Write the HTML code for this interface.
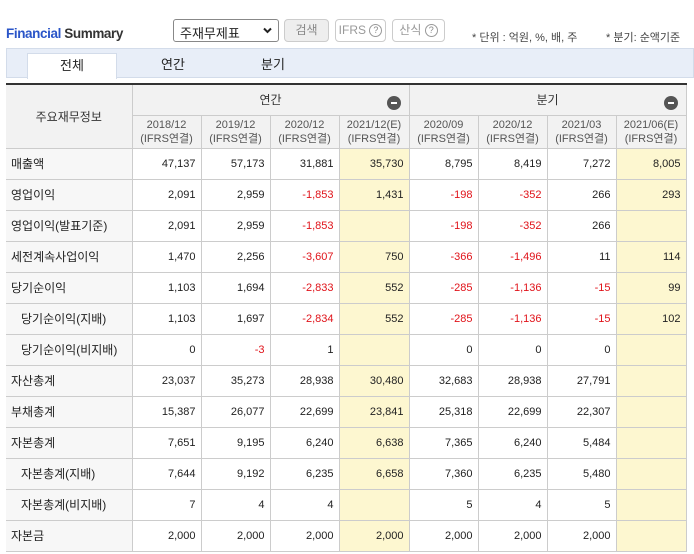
<!DOCTYPE html>
<html><head><meta charset="utf-8"><style>
*{margin:0;padding:0;box-sizing:border-box}
body{width:694px;height:554px;overflow:hidden;background:#fff;font-family:"Liberation Sans","Noto Sans CJK KR",sans-serif;color:#222;position:relative}
.a{position:absolute}
.title{left:6px;top:26px;font-size:13.5px;font-weight:bold;color:#333;letter-spacing:-0.4px}
.title b{color:#2a55c8}
.sel{left:173px;top:19px;width:106px;height:23px;border:1px solid #888;border-radius:3px;font-size:13px;padding:3px 6px}
.btn{top:19px;height:23px;border:1px solid #ccc;border-radius:4px;font-size:12px;color:#999;text-align:center;line-height:21px}
.q{display:inline-block;width:13px;height:13px;border:1px solid #999;border-radius:50%;font-size:9px;line-height:11px;color:#888;vertical-align:1px}
.note{top:29px;font-size:11px;color:#444}
.tabs{left:6px;top:48px;width:688px;height:30px;background:#e8eef8;border:1px solid #d3dcea}
.tab{top:53px;height:25px;font-size:13px;text-align:center;line-height:24px}
table{position:absolute;left:6px;top:83px;border-collapse:collapse;table-layout:fixed;border-top:2px solid #333}
td,th{border:1px solid #ccc;font-size:11px;font-weight:normal;height:31px;text-align:right;padding-right:5px;white-space:nowrap;overflow:hidden}
th{background:#f2f2f2;text-align:center;padding:0;color:#333}
td.l{text-align:left;padding-left:5px;font-size:12px;background:#f7f7f7;border-left:none}
td.i{padding-left:15px}
.y{background:#fdf7d0}
.r{color:#e0131a}
.m{display:inline-block;width:14px;height:14px;border-radius:50%;background:#555;position:absolute;right:8px;top:11px}
.m:after{content:"";position:absolute;left:4px;top:6px;width:6px;height:2px;background:#fff}
th.d{font-size:11px;line-height:14px;color:#555}
</style></head><body>
<div class="a title"><b>Financial</b> Summary</div>
<div class="a sel">주재무제표<svg style="position:absolute;right:6px;top:7px" width="9" height="7" viewBox="0 0 9 7"><path d="M1 1.5L4.5 5L8 1.5" fill="none" stroke="#222" stroke-width="2"/></svg></div>
<div class="a btn" style="left:284px;width:45px;background:#eee;color:#888">검색</div>
<div class="a btn" style="left:335px;width:51px">IFRS <span class="q">?</span></div>
<div class="a btn" style="left:392px;width:53px">산식 <span class="q">?</span></div>
<div class="a note" style="left:472px">* 단위 : 억원, %, 배, 주</div>
<div class="a note" style="left:606px">* 분기: 순액기준</div>
<div class="a tabs"></div>
<div class="a tab" style="left:27px;width:90px;background:#fff;border:1px solid #d3dcea;border-bottom:none;height:26px">전체</div>
<div class="a tab" style="left:140px;width:66px">연간</div>
<div class="a tab" style="left:240px;width:66px">분기</div>
<table>
<colgroup><col style="width:126px"><col style="width:69px"><col style="width:69px"><col style="width:69px"><col style="width:70px"><col style="width:69px"><col style="width:69px"><col style="width:69px"><col style="width:70px"></colgroup>
<tr><th rowspan="2" style="font-size:12px;border-left:none">주요재무정보</th><th colspan="4" style="position:relative;height:31px;font-size:12px">연간<span class="m"></span></th><th colspan="4" style="position:relative;font-size:12px">분기<span class="m"></span></th></tr>
<tr><th class="d" style="height:33px">2018/12<br>(IFRS연결)</th><th class="d">2019/12<br>(IFRS연결)</th><th class="d">2020/12<br>(IFRS연결)</th><th class="d">2021/12(E)<br>(IFRS연결)</th><th class="d">2020/09<br>(IFRS연결)</th><th class="d">2020/12<br>(IFRS연결)</th><th class="d">2021/03<br>(IFRS연결)</th><th class="d">2021/06(E)<br>(IFRS연결)</th></tr>
<tr><td class="l">매출액</td><td>47,137</td><td>57,173</td><td>31,881</td><td class="y">35,730</td><td>8,795</td><td>8,419</td><td>7,272</td><td class="y">8,005</td></tr>
<tr><td class="l">영업이익</td><td>2,091</td><td>2,959</td><td class="r">-1,853</td><td class="y">1,431</td><td class="r">-198</td><td class="r">-352</td><td>266</td><td class="y">293</td></tr>
<tr><td class="l">영업이익(발표기준)</td><td>2,091</td><td>2,959</td><td class="r">-1,853</td><td class="y"></td><td class="r">-198</td><td class="r">-352</td><td>266</td><td class="y"></td></tr>
<tr><td class="l">세전계속사업이익</td><td>1,470</td><td>2,256</td><td class="r">-3,607</td><td class="y">750</td><td class="r">-366</td><td class="r">-1,496</td><td>11</td><td class="y">114</td></tr>
<tr><td class="l">당기순이익</td><td>1,103</td><td>1,694</td><td class="r">-2,833</td><td class="y">552</td><td class="r">-285</td><td class="r">-1,136</td><td class="r">-15</td><td class="y">99</td></tr>
<tr><td class="l i">당기순이익(지배)</td><td>1,103</td><td>1,697</td><td class="r">-2,834</td><td class="y">552</td><td class="r">-285</td><td class="r">-1,136</td><td class="r">-15</td><td class="y">102</td></tr>
<tr><td class="l i">당기순이익(비지배)</td><td>0</td><td class="r">-3</td><td>1</td><td class="y"></td><td>0</td><td>0</td><td>0</td><td class="y"></td></tr>
<tr><td class="l">자산총계</td><td>23,037</td><td>35,273</td><td>28,938</td><td class="y">30,480</td><td>32,683</td><td>28,938</td><td>27,791</td><td class="y"></td></tr>
<tr><td class="l">부채총계</td><td>15,387</td><td>26,077</td><td>22,699</td><td class="y">23,841</td><td>25,318</td><td>22,699</td><td>22,307</td><td class="y"></td></tr>
<tr><td class="l">자본총계</td><td>7,651</td><td>9,195</td><td>6,240</td><td class="y">6,638</td><td>7,365</td><td>6,240</td><td>5,484</td><td class="y"></td></tr>
<tr><td class="l i">자본총계(지배)</td><td>7,644</td><td>9,192</td><td>6,235</td><td class="y">6,658</td><td>7,360</td><td>6,235</td><td>5,480</td><td class="y"></td></tr>
<tr><td class="l i">자본총계(비지배)</td><td>7</td><td>4</td><td>4</td><td class="y"></td><td>5</td><td>4</td><td>5</td><td class="y"></td></tr>
<tr><td class="l">자본금</td><td>2,000</td><td>2,000</td><td>2,000</td><td class="y">2,000</td><td>2,000</td><td>2,000</td><td>2,000</td><td class="y"></td></tr>
</table>
</body></html>
